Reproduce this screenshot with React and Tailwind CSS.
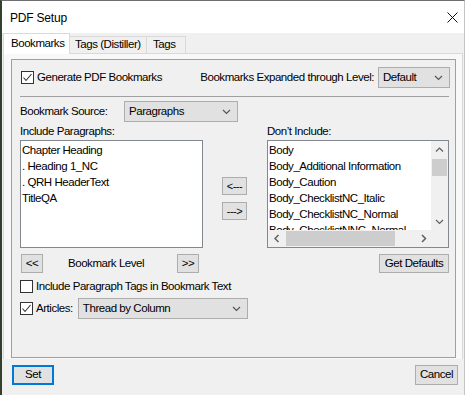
import React from "react";

const FONT = { fontFamily: '"Liberation Sans", Arial, sans-serif' };

function Check({ checked }) {
  return (
    <div className="w-[13px] h-[13px] shrink-0 border border-[#333333] bg-white flex items-center justify-center">
      {checked && (
        <svg width="11" height="11" viewBox="0 0 11 11">
          <polyline points="1.5,5.5 4,8.5 9.5,2" fill="none" stroke="#333" strokeWidth="1.1" />
        </svg>
      )}
    </div>
  );
}

function Chevron({ dir = "down", color = "#555" }) {
  const pts = {
    down: "1,1 4.5,4.5 8,1",
    up: "1,4.5 4.5,1 8,4.5",
  }[dir];
  return (
    <svg width="9" height="6" viewBox="0 0 9 6">
      <polyline points={pts} fill="none" stroke={color} strokeWidth="1.2" />
    </svg>
  );
}

function HChevron({ dir = "left" }) {
  const pts = dir === "left" ? "4.5,1 1,4.5 4.5,8" : "1,1 4.5,4.5 1,8";
  return (
    <svg width="6" height="9" viewBox="0 0 6 9">
      <polyline points={pts} fill="none" stroke="#606060" strokeWidth="1.5" />
    </svg>
  );
}

function Select({ value, className }) {
  return (
    <div className={`h-[21px] bg-[#e1e1e1] border border-[#adadad] flex items-center justify-between pl-[4px] pr-[6px] whitespace-nowrap ${className}`}>
      <span className="leading-none">{value}</span>
      <Chevron />
    </div>
  );
}

function Btn({ children, className }) {
  return (
    <div className={`bg-[#e1e1e1] border border-[#adadad] flex items-center justify-center leading-none whitespace-nowrap ${className}`}>
      {children}
    </div>
  );
}

export default function App() {
  const left = ["Chapter Heading", ". Heading 1_NC", ". QRH HeaderText", "TitleQA"];
  const right = [
    "Body",
    "Body_Additional Information",
    "Body_Caution",
    "Body_ChecklistNC_Italic",
    "Body_ChecklistNC_Normal",
    "Body_ChecklistNNC_Normal",
  ];
  return (
    <div
      style={FONT}
      className="w-[465px] h-[395px] overflow-hidden bg-[#f0f0f0] border-t border-t-[#6e6e6e] border-l-2 border-l-[#34402f] border-r border-r-[#c4c4c4] text-[11.5px] text-black tracking-[-0.45px] whitespace-nowrap"
    >
      {/* title bar */}
      <div className="h-[32px] bg-white flex items-center justify-between pl-[8px] pr-[6px]">
        <span className="text-[12px] tracking-[-0.2px] leading-none mt-[2px]">PDF Setup</span>
        <svg width="11" height="11" viewBox="0 0 11 11" className="mt-[1px]">
          <path d="M0.5 0.5 L10.5 10.5 M10.5 0.5 L0.5 10.5" stroke="#111" strokeWidth="1" />
        </svg>
      </div>

      {/* tab strip */}
      <div className="h-[20px] flex items-end pl-[1px]">
        <div className="relative z-10 -mb-px h-[21px] w-[67px] bg-white border-t border-x border-[#d9d9d9] flex items-center pl-[7px]">
          Bookmarks
        </div>
        <div className="h-[17px] w-[77px] border-t border-r border-[#d9d9d9] flex items-center pl-[5px]">
          Tags (Distiller)
        </div>
        <div className="h-[17px] w-[39px] border-t border-r border-[#d9d9d9] flex items-center pl-[6px]">
          Tags
        </div>
      </div>

      {/* tab page */}
      <div className="ml-[1px] w-[460px] h-[306px] border-t border-x border-[#d9d9d9] bg-[#f8f8f8] pt-[5px] pl-[7px]">
        <div className="w-[445px] h-[299px] border border-[#a0a0a0] bg-[#f0f0f0] pt-[7px] pl-[8px] pr-[5px]">
          {/* row 1 */}
          <div className="h-[21px] flex items-center">
            <div className="ml-px"><Check checked /></div>
            <span className="ml-[3px]">Generate PDF Bookmarks</span>
            <span className="ml-auto mr-[4px]">Bookmarks Expanded through Level:</span>
            <Select value="Default" className="w-[72px]" />
          </div>
          {/* separator */}
          <div className="mt-[8px] h-px bg-[#a0a0a0] mr-px" />
          {/* source row */}
          <div className="mt-[4px] h-[21px] flex items-center">
            <span>Bookmark Source:</span>
            <Select value="Paragraphs" className="ml-auto mr-[212px] w-[114px]" />
          </div>
          {/* labels */}
          <div className="grid grid-cols-[183px_64px_182px] h-[15px] mt-[1px] items-center">
            <span>Include Paragraphs:</span>
            <span />
            <span>Don’t Include:</span>
          </div>
          {/* lists */}
          <div className="grid grid-cols-[183px_64px_182px] mt-[2px]">
            <div className="h-[108px] bg-white border border-[#828790] pl-px pt-px">
              {left.map((t) => (
                <div key={t} className="h-[16px] leading-[16px]">{t}</div>
              ))}
            </div>
            <div className="flex flex-col pl-[19px] pt-[37px] gap-[7px]">
              <Btn className="w-[25px] h-[18px] text-[11px] tracking-[-0.5px]">&lt;---</Btn>
              <Btn className="w-[25px] h-[18px] text-[11px] tracking-[-0.5px]">---&gt;</Btn>
            </div>
            <div className="h-[108px] bg-white border border-[#828790] relative overflow-hidden">
              <div className="pl-px pt-px w-[163px] h-[89px] overflow-hidden">
                {right.map((t) => (
                  <div key={t} className="h-[16px] leading-[16px]">{t}</div>
                ))}
              </div>
              {/* vertical scrollbar */}
              <div className="absolute right-0 top-0 w-[17px] h-[89px] bg-[#f0f0f0] flex flex-col items-center">
                <div className="h-[17px] flex items-center justify-center"><Chevron dir="up" color="#606060" /></div>
                <div className="mt-[1px] w-[15px] h-[17px] bg-[#cdcdcd]" />
                <div className="mt-auto h-[17px] flex items-center justify-center"><Chevron dir="down" color="#606060" /></div>
              </div>
              {/* horizontal scrollbar */}
              <div className="absolute left-0 bottom-0 w-[180px] h-[17px] bg-[#f0f0f0] flex items-center">
                <div className="w-[17px] h-[17px] flex items-center justify-center"><HChevron dir="left" /></div>
                <div className="ml-[1px] w-[109px] h-[15px] bg-[#cdcdcd]" />
                <div className="ml-auto mr-[16px] w-[17px] h-[17px] flex items-center justify-center"><HChevron dir="right" /></div>
              </div>
            </div>
          </div>
          {/* level row */}
          <div className="grid grid-cols-[183px_64px_182px] mt-[6px]">
            <div className="flex items-center h-[19px]">
              <Btn className="ml-px w-[22px] h-[19px]">&lt;&lt;</Btn>
              <span className="ml-[25px]">Bookmark Level</span>
              <Btn className="ml-auto mr-[4px] w-[22px] h-[19px]">&gt;&gt;</Btn>
            </div>
            <span />
            <div className="flex justify-end">
              <Btn className="w-[70px] h-[19px]">Get Defaults</Btn>
            </div>
          </div>
          {/* include tags */}
          <div className="mt-[5px] h-[17px] flex items-center">
            <Check />
            <span className="ml-[3px]">Include Paragraph Tags in Bookmark Text</span>
          </div>
          {/* articles */}
          <div className="mt-[3px] h-[21px] flex items-center">
            <Check checked />
            <span className="ml-[3px]">Articles:</span>
            <Select value="Thread by Column" className="ml-[5px] w-[170px]" />
          </div>
        </div>
      </div>

      {/* bottom buttons */}
      <div className="mt-[6px] flex items-center justify-between pl-[10px] pr-[6px]">
        <div className="w-[42px] h-[20px] bg-[#e1e1e1] border-2 border-[#0078d7] flex items-center justify-center leading-none">
          Set
        </div>
        <Btn className="w-[43px] h-[20px]">Cancel</Btn>
      </div>
    </div>
  );
}
